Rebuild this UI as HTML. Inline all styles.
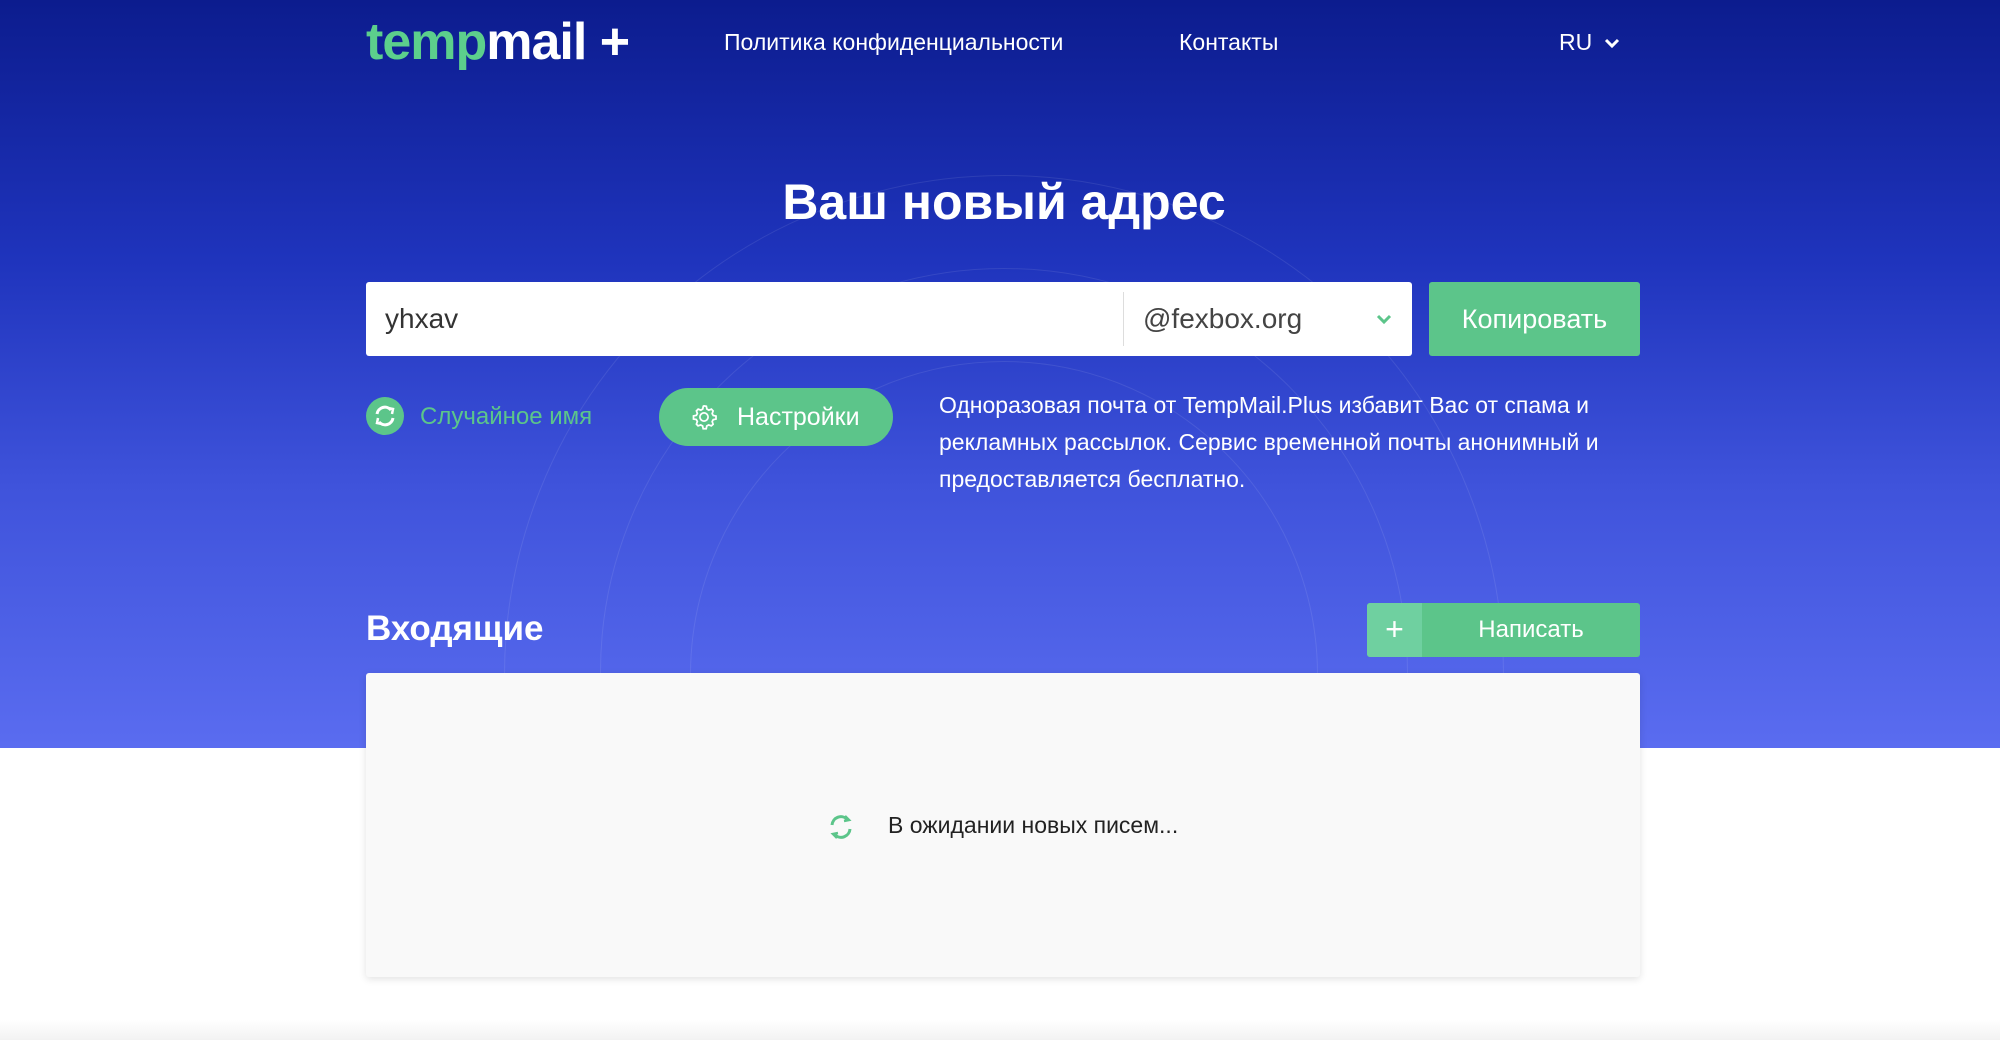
<!DOCTYPE html>
<html><head><meta charset="utf-8"><style>
*{margin:0;padding:0;box-sizing:border-box}
html,body{width:2000px;height:1040px;overflow:hidden}
body{background:#fff;font-family:"Liberation Sans","DejaVu Sans",sans-serif;position:relative}
.hero{position:absolute;left:0;top:0;width:2000px;height:748px;background:linear-gradient(180deg,#0c1c8e 0%,#1f34bd 35%,#3f53db 65%,#5a6cf0 100%);overflow:hidden}
.circ{position:absolute;border:1.5px solid rgba(255,255,255,0.09);border-radius:50%}
.abs{position:absolute}
.logo{left:366px;top:12px;font-size:52px;font-weight:bold;color:#fff;letter-spacing:-1px}
.logo span{color:#5ccf8c}
.nav{color:#fff;font-size:23px;top:29px}
.green{background:#5cc58a}
</style></head><body>
<div class="hero">
<div class="circ" style="left:690px;top:361px;width:628px;height:628px"></div>
<div class="circ" style="left:600px;top:268px;width:808px;height:808px"></div>
<div class="circ" style="left:504px;top:175px;width:1000px;height:1000px"></div>
</div>
<div class="abs logo"><span>temp</span>mail +</div>
<div class="abs nav" style="left:724px">Политика конфиденциальности</div>
<div class="abs nav" style="left:1179px">Контакты</div>
<div class="abs nav" style="left:1559px">RU</div>
<svg class="abs" style="left:1604px;top:37px" width="16" height="12" viewBox="0 0 16 12"><path d="M2 3l6 6 6-6" stroke="#fff" stroke-width="3" fill="none"/></svg>
<div class="abs" style="left:4px;width:2000px;text-align:center;top:173px;color:#fff;font-size:50px;font-weight:bold">Ваш новый адрес</div>
<div class="abs" style="left:366px;top:282px;width:1046px;height:74px;background:#fff;border-radius:3px"></div>
<div class="abs" style="left:1123px;top:292px;width:1px;height:54px;background:#ddd"></div>
<div class="abs" style="left:385px;top:303px;font-size:28px;color:#333">yhxav</div>
<div class="abs" style="left:1143px;top:303px;font-size:28px;color:#444">@fexbox.org</div>
<svg class="abs" style="left:1376px;top:313px" width="16" height="12" viewBox="0 0 16 12"><path d="M2 3l6 6 6-6" stroke="#5cc58a" stroke-width="3" fill="none"/></svg>
<div class="abs green" style="left:1429px;top:282px;width:211px;height:74px;border-radius:3px;color:#fff;font-size:27px;text-align:center;line-height:74px">Копировать</div>
<svg class="abs" style="left:366px;top:397px" width="38" height="38" viewBox="0 0 38 38"><circle cx="19" cy="19" r="19" fill="#5cc58a"/><path d="M11 17a8 8 0 0 1 14-4M27 21a8 8 0 0 1-14 4" stroke="#fff" stroke-width="3" fill="none"/><path d="M22 11l5 1-1 5M16 27l-5-1 1-5" stroke="#fff" stroke-width="2.5" fill="none"/></svg>
<div class="abs" style="left:420px;top:403px;font-size:24px;color:#5cc58a">Случайное имя</div>
<div class="abs green" style="left:659px;top:388px;width:234px;height:58px;border-radius:29px"></div>
<svg class="abs" style="left:690px;top:403px" width="28" height="28" viewBox="0 0 24 24"><path d="M12 2.5l2 .3.5 2.4 1.6.9 2.3-.8 1.4 1.5-.8 2.3.9 1.6 2.4.5v2.6l-2.4.5-.9 1.6.8 2.3-1.5 1.4-2.3-.8-1.6.9-.5 2.4h-2.6l-.5-2.4-1.6-.9-2.3.8-1.4-1.5.8-2.3-.9-1.6-2.4-.5v-2.6l2.4-.5.9-1.6-.8-2.3 1.5-1.4 2.3.8 1.6-.9.5-2.4z" stroke="#fff" stroke-width="1.5" fill="none"/><circle cx="12" cy="12" r="3.5" stroke="#fff" stroke-width="1.5" fill="none"/></svg>
<div class="abs" style="left:737px;top:403px;font-size:25px;color:#fff">Настройки</div>
<div class="abs" style="left:939px;top:387px;font-size:23px;line-height:37px;color:#fff;width:700px">Одноразовая почта от TempMail.Plus избавит Вас от спама и рекламных рассылок. Сервис временной почты анонимный и предоставляется бесплатно.</div>
<div class="abs" style="left:366px;top:609px;font-size:35px;font-weight:bold;color:#fff">Входящие</div>
<div class="abs green" style="left:1367px;top:603px;width:273px;height:54px;border-radius:3px"></div>
<div class="abs" style="left:1367px;top:603px;width:55px;height:54px;background:#6fd0a0;border-radius:3px 0 0 3px;color:#fff;font-size:32px;text-align:center;line-height:52px">+</div>
<div class="abs" style="left:1422px;top:603px;width:218px;text-align:center;line-height:54px;font-size:24px;color:#fff">Написать</div>
<div class="abs" style="left:366px;top:673px;width:1274px;height:304px;background:#f9f9f9;border-radius:3px;box-shadow:0 2px 8px rgba(0,0,0,0.12)"></div>
<svg class="abs" style="left:825px;top:812px" width="32" height="30" viewBox="0 0 32 30"><path d="M7 13a9 9 0 0 1 15-6M25 17a9 9 0 0 1-15 6" stroke="#5cc58a" stroke-width="3" fill="none"/><path d="M20 4l4 4-5 1M12 26l-4-4 5-1" stroke="#5cc58a" stroke-width="2.5" fill="none"/></svg>
<div class="abs" style="left:888px;top:812px;font-size:23px;color:#222">В ожидании новых писем...</div>
<div class="abs" style="left:0;top:1020px;width:2000px;height:20px;background:linear-gradient(#fff,#f2f2f2)"></div>
</body></html>
